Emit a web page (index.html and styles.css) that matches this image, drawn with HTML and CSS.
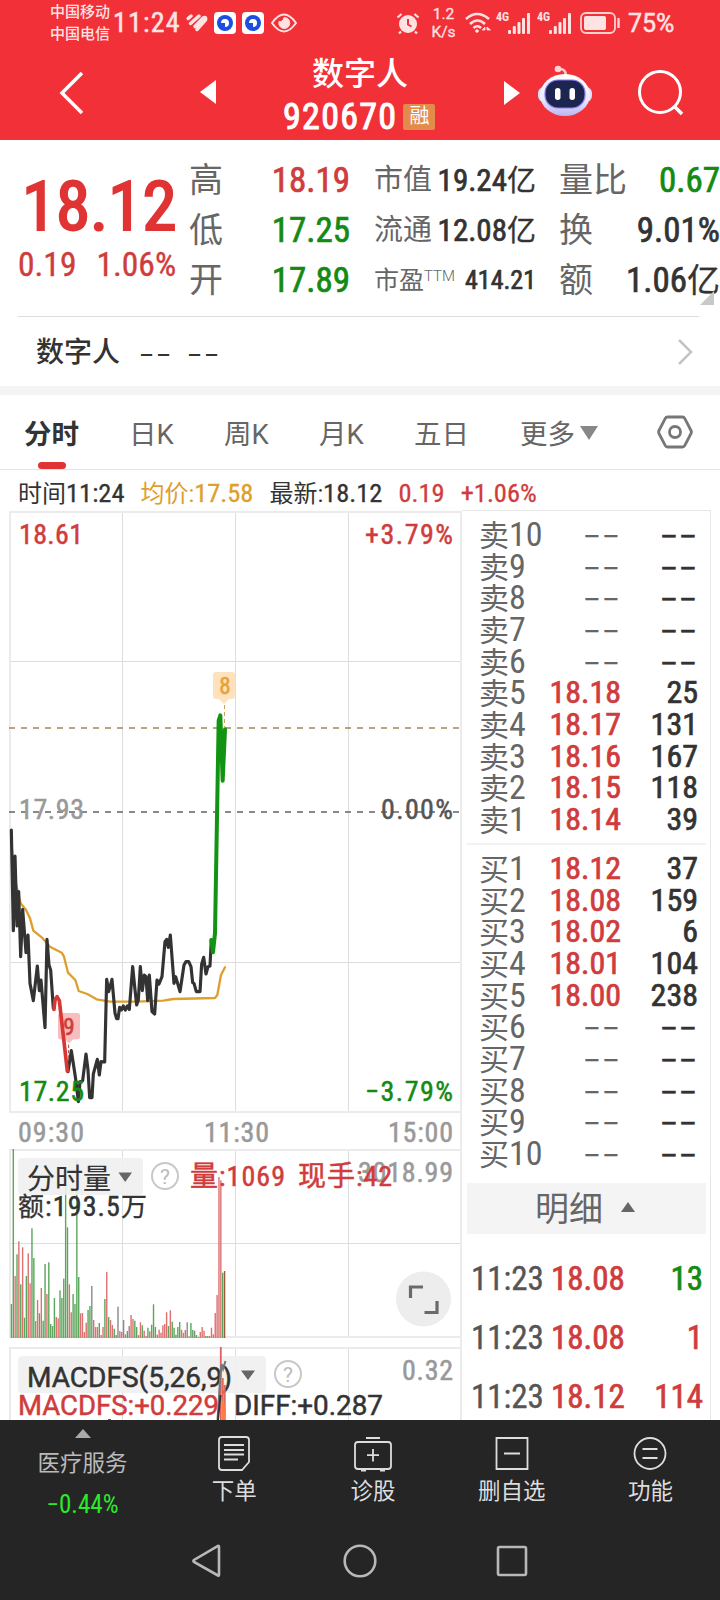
FILE: index.html
```html
<!DOCTYPE html>
<html lang="zh-CN">
<head>
  <meta charset="UTF-8" />
  <meta name="viewport" content="width=device-width, initial-scale=1.0"/>
  <title>数字人 920670</title>
  <link rel="stylesheet" href="styles.css">
</head>
<body>
  <header>
    <div class="status-bar">
      <div class="carrier"><span>中国移动</span><span>中国电信</span></div>
      <span class="clock">11:24</span>
      <svg class="st-heart" width="22" height="20" viewBox="0 0 22 20" fill="none" stroke="#ffe3e3" stroke-width="3.400" stroke-linecap="round">
        <path d="M2.200 5.500L5 3M4.500 10.500L13 3M9 13.500L17 5Q20.500 3 19.500 7L11 16.500"/>
      </svg>
      <svg class="st-app" width="22" height="22" viewBox="0 0 22 22">
        <rect width="22" height="22" rx="4" fill="#fff"/><circle cx="11" cy="11" r="8" fill="#1c50dc"/><path d="M7 11a4 4 0 1 1 4 4v-4z" fill="#fff"/>
      </svg>
      <svg class="st-app" width="22" height="22" viewBox="0 0 22 22">
        <rect width="22" height="22" rx="4" fill="#fff"/><circle cx="11" cy="11" r="8" fill="#1c50dc"/><path d="M7 11a4 4 0 1 1 4 4v-4z" fill="#fff"/>
      </svg>
      <svg class="st-eye" width="26" height="20" viewBox="0 0 26 20" fill="none" stroke="#ffe3e3" stroke-width="2">
        <path d="M1 10Q13-7 25 10Q13 27 1 10z"/><path d="M13 4.500a5.500 5.500 0 1 1-5 4q4 1 5-4z" fill="#ffe3e3" stroke-width="1"/>
      </svg>
      <svg class="st-alarm" width="24" height="22" viewBox="0 0 24 22">
        <circle cx="12" cy="12" r="9" fill="#ffe3e3"/><path d="M12 7v5.500l3.500 2" fill="none" stroke="#f23038" stroke-width="2"/>
        <path d="M1.500 5.500L5.500 2M22.500 5.500L18.500 2M5 19.500l-2 2M19 19.500l2 2" stroke="#ffe3e3" stroke-width="2.200" fill="none"/>
      </svg>
      <div class="speed"><span>1.2</span><span>K/s</span></div>
      <svg class="st-wifi" width="27" height="23" viewBox="0 0 27 23" fill="none" stroke="#ffe3e3" stroke-width="2.600">
        <path d="M1 7Q12-3 24 7M5 12Q12.500 5 20 12M8.500 16Q12.500 12.500 16 16"/><circle cx="12" cy="19" r="1.300" fill="#ffe3e3" stroke-width="1"/>
        <path d="M20 15l-3 3h3zM22 15l3.500 3H22z" fill="#ffe3e3" stroke-width=".8"/>
      </svg>
      <span class="net">4G</span>
      <svg class="st-signal" width="23" height="21" viewBox="0 0 23 21" fill="#ffe3e3">
        <rect x="0" y="17" width="3" height="4" rx="1"/><rect x="4.800" y="13" width="3" height="8" rx="1"/><rect x="9.500" y="9" width="3" height="12" rx="1"/><rect x="14" y="5" width="3" height="16" rx="1"/><rect x="19" y="0" width="3" height="21" rx="1"/>
      </svg>
      <span class="net">4G</span>
      <svg class="st-signal" width="23" height="21" viewBox="0 0 23 21" fill="#ffe3e3">
        <rect x="0" y="17" width="3" height="4" rx="1"/><rect x="4.800" y="13" width="3" height="8" rx="1"/><rect x="9.500" y="9" width="3" height="12" rx="1"/><rect x="14" y="5" width="3" height="16" rx="1"/><rect x="19" y="0" width="3" height="21" rx="1"/>
      </svg>
      <svg class="st-battery" width="41" height="22" viewBox="0 0 41 22">
        <rect x="1" y="1" width="34" height="20" rx="5" fill="none" stroke="#ffd0d0" stroke-width="1.800"/><rect x="4" y="4" width="22" height="14" rx="2" fill="#ffe3e3"/><path d="M38.500 6v10" stroke="#ffd0d0" stroke-width="2.500"/>
      </svg>
      <span class="percent">75%</span>
    </div>
    <div class="title-bar">
      <svg class="back" width="26" height="44" viewBox="0 0 26 44" fill="none" stroke="#fff" stroke-width="3.500"><path d="M24 2L4 22L24 42"/></svg>
      <svg class="prev" width="16" height="24" viewBox="0 0 16 24" fill="#fff"><path d="M16 0v24L0 12z"/></svg>
      <div class="stock">
        <h1>数字人</h1>
        <div class="code">920670<em>融</em></div>
      </div>
      <svg class="next" width="16" height="24" viewBox="0 0 16 24" fill="#fff"><path d="M0 0v24l16-12z"/></svg>
      <svg class="robot" width="54" height="52" viewBox="0 0 54 52">
        <defs><linearGradient id="shell" x1="0" y1="0" x2="0" y2="1"><stop offset="0" stop-color="#fff"/><stop offset=".6" stop-color="#eceafd"/><stop offset="1" stop-color="#b9b6f0"/></linearGradient></defs>
        <path d="M20 4q8-1 8 7" fill="none" stroke="#ffc9cf" stroke-width="2.500"/><circle cx="20" cy="4" r="3.300" fill="#ffd3d6"/>
        <rect x="0" y="22" width="54" height="15" rx="6" fill="#d9dcfb"/>
        <ellipse cx="27" cy="30" rx="25" ry="21" fill="url(#shell)"/>
        <rect x="7" y="15" width="40" height="28" rx="13" fill="#1c2450" stroke="#8f7bf0" stroke-width="1.200"/>
        <rect x="17" y="23" width="5.500" height="12" rx="2.700" fill="#fff"/><rect x="31.500" y="23" width="5.500" height="12" rx="2.700" fill="#fff"/>
      </svg>
      <svg class="search" width="46" height="46" viewBox="0 0 46 46" fill="none" stroke="#fff" stroke-width="3"><circle cx="22" cy="22" r="20.500"/><path d="M36 36l8 8" stroke-width="3.500"/></svg>
    </div>
  </header>

  <section class="quote">
    <div class="price-block">
      <div class="price">18.12</div>
      <div class="change"><span>0.19</span><span>1.06%</span></div>
    </div>
    <div class="stats">
      <div><label>高</label><b class="red">18.19</b></div>
      <div><label>低</label><b class="green">17.25</b></div>
      <div><label>开</label><b class="green">17.89</b></div>
    </div>
    <div class="stats mid">
      <div><label>市值</label><b>19.24<i>亿</i></b></div>
      <div><label>流通</label><b>12.08<i>亿</i></b></div>
      <div class="pe"><label>市盈<sup>TTM</sup></label><b>414.21</b></div>
    </div>
    <div class="stats">
      <div><label>量比</label><b class="green">0.67</b></div>
      <div><label>换</label><b>9.01%</b></div>
      <div><label>额</label><b>1.06<i>亿</i></b></div>
    </div>
    <span class="corner"></span>
  </section>

  <div class="related">
    <span class="name">数字人</span><span class="dash">--</span><span class="dash">--</span>
    <svg width="16" height="28" viewBox="0 0 16 28" fill="none" stroke="#c4c4c4" stroke-width="2.500"><path d="M2 2l12 12L2 26"/></svg>
  </div>

  <nav class="tabs">
    <span class="active">分时</span><span>日K</span><span>周K</span><span>月K</span><span>五日</span><span>更多<i></i></span>
    <svg width="36" height="36" viewBox="0 0 36 36" fill="none" stroke="#777" stroke-width="2.800"><path d="M10.500 3h15q1.500 0 2.200 1.300l6.300 12.200q.8 1.500 0 3l-6.300 12.200Q27 33 25.500 33h-15q-1.500 0-2.200-1.300L2 19.500q-.8-1.500 0-3L8.300 4.300Q9 3 10.500 3z"/><circle cx="18" cy="18" r="5.500"/></svg>
  </nav>

  <div class="info">
    <span>时间<b>11:24</b></span><span class="avg">均价:<b>17.58</b></span><span>最新:<b>18.12</b></span><span class="red"><b>0.19</b></span><span class="red"><b>+1.06%</b></span>
  </div>

  <main>
    <svg class="charts" width="462" height="909" viewBox="0 511 462 909">
      <!-- grid -->
      <g class="grid">
        <path d="M122.500 511V1112M235.500 511V1112M348.500 511V1112M9 661.500H462M9 962.500H462"/>
        <path d="M122.500 1149V1338M235.500 1149V1338M348.500 1149V1338M9 1243.500H462"/>
        <path d="M122.500 1347V1420M235.500 1347V1420M348.500 1347V1420"/>
        <path class="frame" d="M461 512H10V1112H461M461 1150H10V1337H461M10 1420V1348H461M461 511V1420"/>
      </g>
      <path d="M9 728H460" stroke="#b8a47c" stroke-width="2" stroke-dasharray="6 6"/>
      <path d="M9 812H460" stroke="#888" stroke-width="2" stroke-dasharray="6 6"/>

      <!-- axis labels -->
      <g class="axis">
        <text x="19" y="544" class="red" textLength="64">18.61</text>
        <text x="365" y="544" class="red" textLength="88">+3.79%</text>
        <text x="19" y="818.500" class="gray" textLength="65">17.93</text>
        <text x="381" y="818.500" class="dim" textLength="72">0.00%</text>
        <text x="365" y="1101" class="green" textLength="88">−3.79%</text>
        <text x="18" y="1142" class="gray" textLength="66">09:30</text>
        <text x="204" y="1142" class="gray" textLength="65">11:30</text>
        <text x="388" y="1142" class="gray" textLength="65">15:00</text>
      </g>

      <!-- average and price lines, drawn at 3x -->
      <g transform="translate(0 800) scale(.33333)" fill="none" stroke-linejoin="round" stroke-linecap="round">
        <path stroke="#dda02c" stroke-width="7" d="M34 130L45 240L62 310L78 330L90 355L100 392L125 412L150 440L185 458L192 470L204 518L226 540L236 573L262 582L290 598L330 605L410 605L490 602L520 597L645 594L652 585L663 525L675 502"/>
        <path stroke="#333" stroke-width="9.500" d="M34 90L40 392L45 168L51 378L56 275L62 470L68 328L78 458L84 405L90 550L100 602L112 498L118 572L123 540L135 683L141 418L147 495L152 510L160 625M204 815L214 752L226 830L235 905L240 845L248 842L258 762L264 810L269 893L276 893L280 822L292 778L298 825L303 785L314 786L320 538L326 575L336 538L345 640L350 656L354 656L359 622L364 630L370 618L376 630L382 618L388 628L398 500L404 560L410 615L415 600L421 500L427 572L433 525L438 530L443 602L448 525L456 635L464 642L471 540L477 552L486 530L495 425L500 418L505 442L511 405L522 550L527 530L540 575L552 495L558 485L566 485L573 500L578 548L582 550L589 575L600 575L605 492L611 472L618 522L624 500L630 498L634 420"/>
        <path fill="#f8bdbd" stroke="none" d="M182 639H232Q240 639 240 647V710Q240 718 232 718H220L207 730L194 718H182Q174 718 174 710V647Q174 639 182 639z"/>
        <path stroke="#d93636" stroke-width="11" d="M162 628L165 600L171 590L178 602L202 813"/>
        <path stroke="#b04040" stroke-width="3" stroke-dasharray="8 8" d="M206 735V780"/>
        <path stroke="#119411" stroke-width="12" d="M634 420L639 457L645 400L656 -238L661 -254L668 -58L675 -212"/>
      </g>
      <text x="19" y="1101" class="lbl green" textLength="65">17.25</text>
      <text x="69" y="1035" class="mark red">9</text>
      <path d="M216 672H232Q235 672 235 675V696Q235 699 232 699H229L224 704L219 699H216Q213 699 213 696V675Q213 672 216 672z" fill="#fde2bd"/>
      <path d="M224.500 705V728" stroke="#cfa050" stroke-dasharray="4 3"/>
      <text x="225" y="693.500" class="mark orange">8</text>

      <!-- volume -->
      <g id="volume"></g>
      <rect x="18" y="1158" width="125" height="37" rx="4" class="pill"/>
      <text x="27" y="1189" class="name">分时量</text>
      <path d="M118.500 1172.500H132L125.200 1182z" fill="#666"/>
      <g class="help"><circle cx="165" cy="1176" r="13"/><text x="165" y="1184">?</text></g>
      <text x="358" y="1182" class="lbl gray" textLength="95">3018.99</text>
      <text x="190" y="1186" class="lbl red" textLength="95">量:1069</text>
      <text x="298" y="1186" class="lbl red" textLength="94">现手:42</text>
      <text x="18" y="1216" class="lbl" textLength="129"><tspan class="cn">额</tspan>:193.5<tspan class="cn">万</tspan></text>
      <circle cx="423.500" cy="1299" r="27.500" fill="#ededed"/>
      <path d="M410.500 1298V1287H423M437 1301V1312.500H424.500" fill="none" stroke="#6a6a6a" stroke-width="3.200"/>

      <!-- macd -->
      <rect x="18" y="1356" width="248" height="37" rx="4" class="pill"/>
      <text x="27" y="1387" class="latin" textLength="205" lengthAdjust="spacingAndGlyphs">MACDFS(5,26,9)</text>
      <path d="M241 1370.500H255L248 1380z" fill="#666"/>
      <g class="help"><circle cx="288" cy="1374" r="13"/><text x="288" y="1382">?</text></g>
      <text x="402" y="1380" class="lbl gray" textLength="51">0.32</text>
      <path d="M220.800 1347V1420" stroke="#e06060" stroke-width="1.800"/>
      <path d="M222.800 1420V1378M224.800 1420V1385" stroke="#e06a5a" stroke-width="1.800"/>
      <path d="M222 1420V1400L225.500 1407V1420z" fill="#ff7a45"/>
      <path d="M217.500 1420L220 1380L221.500 1364L223 1369L225.500 1361" fill="none" stroke="#777" stroke-width="2"/>
      <path d="M218 1420L220.500 1395" stroke="#333" stroke-width="2"/>
      <path d="M108 1419.500H111" stroke="#b04040"/>
      <text x="18" y="1414.500" class="latin red" textLength="201" lengthAdjust="spacingAndGlyphs">MACDFS:+0.229</text>
      <text x="234" y="1414.500" class="latin" textLength="149" lengthAdjust="spacingAndGlyphs">DIFF:+0.287</text>
    </svg>

    <aside>
      <div class="book" id="asks"></div>
      <div class="book bids" id="bids"></div>
      <div class="detail">明细<i></i></div>
      <div class="trades">
        <div><span>11:23</span><b class="red">18.08</b><b class="green">13</b></div>
        <div><span>11:23</span><b class="red">18.08</b><b class="red">1</b></div>
        <div><span>11:23</span><b class="red">18.12</b><b class="red">114</b></div>
      </div>
    </aside>
  </main>

  <footer>
    <div class="menu">
      <div class="sector"><i></i><span>医疗服务</span><b>−0.44%</b></div>
      <div class="item">
        <svg width="38" height="38" viewBox="0 0 38 38"><path d="M7 3H31Q34 3 34 6V28L27 36H7Q4 36 4 33V6Q4 3 7 3zM9 11H29M9 16H29M9 20.500H29M9 25.500H23"/></svg>
        <span>下单</span>
      </div>
      <div class="item">
        <svg width="38" height="38" viewBox="0 0 38 38"><path d="M12 4H26M4 8H34Q37 8 37 11V32Q37 35 34 35H4Q1 35 1 32V11Q1 8 4 8zM19 15V27.500M13 21.200H25M7 36.500H12M26 36.500H31"/></svg>
        <span>诊股</span>
      </div>
      <div class="item">
        <svg width="38" height="38" viewBox="0 0 38 38"><path d="M3.500 4H34.500V35H3.500zM11 19.500H27"/></svg>
        <span>删自选</span>
      </div>
      <div class="item">
        <svg width="38" height="38" viewBox="0 0 38 38"><circle cx="19" cy="19.500" r="15.500"/><path d="M11.500 15H26.500M11.500 24H26.500"/></svg>
        <span>功能</span>
      </div>
    </div>
    <div class="sysnav">
      <svg width="30" height="34" viewBox="0 0 30 34"><path d="M28 3V31Q28 32 27 31.500L3 18Q2 17 3 16L27 2Q28 1.500 28 3z"/></svg>
      <svg width="34" height="34" viewBox="0 0 34 34"><circle cx="17" cy="17" r="15.300"/></svg>
      <svg width="32" height="32" viewBox="0 0 32 32"><rect x="2" y="2" width="28" height="28" rx="1.500"/></svg>
    </div>
  </footer>

  <script>
    // order book, [price, volume] from the top row down
    let asks = [null, null, null, null, null, ["18.18", 25], ["18.17", 131], ["18.16", 167], ["18.15", 118], ["18.14", 39]]
    let bids = [["18.12", 37], ["18.08", 159], ["18.02", 6], ["18.01", 104], ["18.00", 238], null, null, null, null, null]

    let row = (name, n, val) => {
        let cells = val
            ? `<b class="red">${val[0]}</b><b>${val[1]}</b>`
            : `<b class="none">--</b><b class="none dark">--</b>`
        return `<div><label>${name}<u>${n}</u></label>${cells}</div>`
    }
    document.getElementById("asks").innerHTML = asks.map((v, i) => row("卖", 10 - i, v)).join("")
    document.getElementById("bids").innerHTML = bids.map((v, i) => row("买", i + 1, v)).join("")

    // one bar per minute: colour + height
    let bars = "g102 g567 r186 g251 r290 g161 r272 g61 g186 r254 r164 g329 g240 r51 r114 g74 r150 g52 g222 r132 g227 g42 g36 g120 r63 r59 g143 g120 g178 g454 g332 r161 r77 g132 g102 g536 g183 r74 r75 r18 r46 g84 g96 k156 r54 r33 r33 g45 r9 r33 g117 r198 g63 r54 r39 g28 g9 k94 r21 r18 k54 r11 g21 k36 r69 r57 g52 g33 r9 r47 g38 r22 r6 g31 r20 g40 g101 g33 r10 r25 r16 r38 r42 r77 g36 r83 g49 g31 g10 g33 g48 r25 r16 r24 k47 r5 g45 g24 k22 g9 k3 r18 r33 r22 g6 r6 r6 r31 r11 r75 r129 r483 r473 g196 d201".split(" ")
    let colors = { g: "#5aa65a", r: "#dd7070", k: "#8a8a8a", d: "#9a5a3a" }
    document.getElementById("volume").innerHTML = bars.map((b, i) => {
        let h = b.slice(1) / 3
        return `<rect x="${(10.7 + i * 1.870).toFixed(2)}" y="${(1338 - h).toFixed(1)}" width="1.4" height="${h.toFixed(1)}" fill="${colors[b[0]]}"/>`
    }).join("")
  </script>
</body>
</html>
```

FILE: styles.css
```css
* {
  margin: 0;
  padding: 0;
  box-sizing: border-box;
}

body {
  width: 720px;
  height: 1600px;
  overflow: hidden;
  background: #fff;
  color: #333;
  font-family: "Roboto Condensed", "Noto Sans CJK SC", sans-serif;
  line-height: 1;
}

svg { display: block; flex: none; }
i, em { font-style: normal; }
u { text-decoration: none; }
b { font-weight: 400; -webkit-text-stroke: .7px; }
.red { color: #d03c3c; fill: #d03c3c; }
.green { color: #148a14; fill: #148a14; }

/* header */
header {
  height: 140px;
  background: #f23038;
  color: #fff;
}
.status-bar {
  display: flex;
  align-items: center;
  height: 46px;
  padding-left: 50px;
  color: #ffe3e3;
}
.carrier {
  display: flex;
  flex-direction: column;
  gap: 7px;
  font-size: 15px;
  font-weight: 500;
  width: 63px;
}
.clock { font: 28px/1 "Roboto Condensed"; letter-spacing: 1.2px; width: 73px; -webkit-text-stroke: .5px; }
.st-heart { margin-right: 6px; }
.st-app { margin-right: 6px; }
.st-eye { margin-left: 1px; }
.st-alarm { margin-left: 99px; }
.speed {
  display: flex;
  flex-direction: column;
  align-items: center;
  margin-left: 10px;
  width: 27px;
  font: 15.500px/18px Roboto;
  -webkit-text-stroke: .3px;
}
.st-wifi { margin-left: 8px; }
.net { margin: -12px 0 0 4px; width: 12px; font: 700 12px/1 "Roboto Condensed"; }
.st-signal { margin-right: 2px; }
.st-battery { margin-left: 6px; }
.percent { margin-left: 7px; font: 25px/1 Roboto; -webkit-text-stroke: .5px; }

.title-bar {
  display: flex;
  align-items: center;
  height: 94px;
  padding-left: 58px;
}
.prev { margin: -2px 0 0 116px; }
.stock { width: 288px; padding-left: 67px; margin-top: 6px; }
.stock h1 { font-size: 32px; font-weight: 500; padding-left: 29px; }
.code { display: flex; align-items: center; margin-top: 9px; font-size: 36px; letter-spacing: 1.3px; -webkit-text-stroke: 1px; }
.code em {
  margin-left: 6px;
  width: 32px;
  height: 26px;
  border-radius: 2px;
  background: #e28b4b;
  font-size: 20px;
  line-height: 25px;
  text-align: center;
  letter-spacing: 0;
  -webkit-text-stroke: 0;
}
.robot { margin: -4px 0 0 18px; }
.search { margin-left: 46px; }

/* quote */
.quote {
  position: relative;
  display: flex;
  height: 176px;
  padding-top: 15px;
}
.price-block { width: 189px; color: #e03434; }
.price { padding: 17px 0 0 22px; font-size: 69px; white-space: nowrap; -webkit-text-stroke: 2.200px; }
.change { display: flex; gap: 20px; padding: 7px 0 0 18px; font-size: 33.500px; color: #d03c3c; -webkit-text-stroke: .4px; }
.stats { width: 161px; margin-right: 24px; }
.stats.mid { width: 162px; margin-right: 23px; }
.stats:nth-of-type(4) { width: 161px; margin-right: 0; }
.stats div { display: flex; justify-content: space-between; align-items: center; height: 50px; white-space: nowrap; }
.stats label { font-size: 34px; color: #666; }
.stats b { font-size: 35px; }
.stats i { font-size: 33px; -webkit-text-stroke: .3px; }
.mid label { font-size: 29px; }
.mid b { font-size: 31px; }
.mid i { font-size: 29px; }
.mid .pe label { font-size: 25px; }
.mid .pe b { font-size: 26px; }
.pe sup { font: 300 15px/1 Roboto; vertical-align: 8px; }
.corner {
  position: absolute;
  right: 6px;
  bottom: 11px;
  border-left: 14px solid transparent;
  border-bottom: 14px solid #c9c9c9;
}

.related {
  display: flex;
  align-items: center;
  height: 70px;
  margin: 0 21px 0 18px;
  padding-left: 18px;
  border-top: 1px solid #ddd;
  font-size: 28px;
}
.related .name { margin-top: 3px; font-weight: 500; }
.related .dash {
  margin: -2px 29px 0 0;
  width: 19px;
  font: 28px/1 "Noto Sans CJK SC";
  letter-spacing: 1.200px;
  transform: scaleX(1.550);
  transform-origin: left;
  white-space: nowrap;
}
.related .name + .dash { margin-left: 19px; }
.related svg { margin-left: auto; margin-right: 6px; }

/* tabs */
.tabs {
  display: flex;
  align-items: center;
  height: 84px;
  border-top: 9px solid #f4f4f4;
  border-bottom: 1px solid #e4e4e4;
  padding-left: 24px;
  font-family: Roboto, "Noto Sans CJK SC", sans-serif;
  font-size: 27.500px;
  color: #666;
}
.tabs span { position: relative; top: 3px; white-space: nowrap; width: 95px; }
.tabs .active { width: 105px; font-weight: 700; color: #333; }
.tabs .active::after {
  content: "";
  position: absolute;
  left: 14px;
  top: 41px;
  width: 28px;
  height: 7px;
  border-radius: 4px;
  background: #e03434;
}
.tabs span:nth-child(5) { width: 106px; }
.tabs span:nth-child(6) { width: 137px; }
.tabs i {
  display: inline-block;
  margin: 0 0 4px 5px;
  border: 9px solid transparent;
  border-top: 14px solid #888;
  border-bottom: 0;
}

.info {
  display: flex;
  height: 41px;
  padding: 11px 0 0 18px;
  font-size: 24px;
  white-space: nowrap;
}
.info span { margin-right: 16px; }
.info b { font-size: 26.500px; line-height: 24px; -webkit-text-stroke: .3px; }
.avg { color: #dda02c; }

/* charts */
main { display: flex; height: 909px; }
.grid path { fill: none; stroke: #dedede; }
.grid .frame { stroke: #ebebeb; stroke-width: 2; }
.charts text { font-size: 28px; }
.charts .gray { fill: #999; stroke: #999; }
.charts .dim { fill: #555; stroke: #555; }
.charts .lbl, .charts .latin, .charts .axis text { stroke-width: .5px; }
.charts .lbl, .charts .latin, .charts .name { fill: #333; stroke: #333; }
.charts .name { stroke-width: .2px; }
.charts .lbl.gray { fill: #999; stroke: #999; }
.charts text.red { fill: #d03c3c; stroke: #d03c3c; }
.charts text.green { fill: #148a14; stroke: #148a14; }
.charts .cn { font-size: 26px; stroke-width: .3px; }
.charts .latin { font-family: Roboto; font-size: 28px; }
.charts .mark { font-size: 23px; stroke-width: .6px; text-anchor: middle; }
.orange { fill: #eba03b; stroke: #eba03b; }
.pill { fill: #f0f0f0; fill-opacity: .9; }
.help circle { fill: none; stroke: #c8c8c8; stroke-width: 2; }
.charts .help text { font: 21px Roboto; fill: #bbb; text-anchor: middle; }

/* order book */
aside {
  width: 249px;
  height: 910px;
  margin-top: -1px;
  border: 1px solid #e6e6e6;
  border-left: 0;
  border-bottom: 0;
  padding: 6px 4px 0 5px;
}
.book { height: 328px; padding: 0 8px 0 12px; border-bottom: 2px solid #f2f2f2; }
.book.bids { height: 338px; border: 0; padding-top: 6px; }
.book div { display: grid; grid-template-columns: 70px 72px 1fr; height: 31.660px; align-items: center; }
.book label { font-size: 30px; color: #666; white-space: nowrap; }
.book label u { font-size: 34px; }
.book b { font-size: 32px; text-align: right; white-space: nowrap; }
.book .none {
  font: 32px/1 "Noto Sans CJK SC";
  letter-spacing: .8px;
  color: #666;
  transform: translateY(-3px) scaleX(1.600);
  transform-origin: right;
  -webkit-text-stroke: 0;
}
.book .dark { color: #333; -webkit-text-stroke: .3px; }

.detail {
  display: flex;
  align-items: center;
  height: 51px;
  padding-left: 68px;
  background: #f4f4f4;
  color: #666;
  font-size: 34px;
}
.detail i {
  margin: -4px 0 0 18px;
  border: 7px solid transparent;
  border-bottom: 10px solid #666;
  border-top: 0;
}
.trades { padding: 15px 3px 0 4px; }
.trades div { display: flex; align-items: center; height: 59px; font-size: 33px; }
.trades span { width: 80px; color: #555; -webkit-text-stroke: .4px; }
.trades b:last-child { margin-left: auto; }

/* footer */
footer { height: 180px; background: #252525; }
.menu { display: grid; grid-template-columns: 165px repeat(4, 138.700px); height: 100px; }
.sector { display: flex; flex-direction: column; align-items: center; padding-top: 9px; color: #bbb; font-size: 22.500px; }
.sector i { border: 8px solid transparent; border-bottom: 9px solid #aaa; border-top: 0; }
.sector span { margin-top: 14px; }
.sector b { margin-top: 17px; font-size: 25px; color: #2bea2b; -webkit-text-stroke: 0; }
.item { display: flex; flex-direction: column; align-items: center; padding-top: 14px; color: #ddd; font-size: 22.500px; }
.item svg { fill: none; stroke: #ddd; stroke-width: 1.800; }
.item span { margin-top: 8px; }
.sysnav { display: flex; align-items: center; height: 82px; padding-left: 191px; }
.sysnav svg { fill: none; stroke: #b8b8b8; stroke-width: 2.600; }
.sysnav svg + svg { margin-left: 122px; }
.sysnav svg:last-child { margin-left: 119px; }
```
